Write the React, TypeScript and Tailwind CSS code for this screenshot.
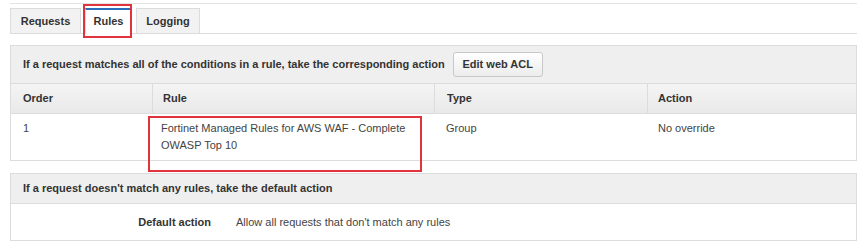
const font = { fontFamily: '"Liberation Sans", Arial, sans-serif' };

function Tab({ label, active }: { label: string; active?: boolean }) {
  return (
    <div
      className={
        "relative h-[26px] -mb-px flex items-center justify-center border border-[#dcdcdc] text-[11px] font-bold text-[#333] " +
        (active ? "bg-white border-b-white border-t-2 border-t-[#2a6ebb]" : "bg-[#f2f2f2]")
      }
    >
      {label}
      {active && <div className="absolute -left-[3px] -right-[1px] -top-[6px] -bottom-[5px] border-2 border-[#e0333c]" />}
    </div>
  );
}

export default function App() {
  return (
    <div className="w-[866px] h-[246px] bg-white text-[#444]" style={font}>
      <div className="ml-[10px] w-[847px]">
        <div className="mt-[3px] border-t border-[#e3e3e3]" />
        <div className="mt-[4px] flex gap-[4px] border-b border-[#dcdcdc]">
          <div className="w-[71px]"><Tab label="Requests" /></div>
          <div className="w-[47px]"><Tab label="Rules" active /></div>
          <div className="w-[64px]"><Tab label="Logging" /></div>
        </div>

        <div className="mt-[11px] border border-[#dcdcdc]">
          <div className="h-[38px] flex items-center px-[12px] bg-[#efefef] border-b border-[#dcdcdc] text-[11px] font-bold text-[#333]">
            <span>If a request matches all of the conditions in a rule, take the corresponding action</span>
            <button className="ml-[8px] h-[25px] w-[90px] rounded-[3px] border border-[#c8c8c8] bg-gradient-to-b from-white to-[#ececec] text-[11px] font-bold text-[#333]">
              Edit web ACL
            </button>
          </div>
          <div className="grid grid-cols-[141px_282px_213px_1fr] h-[30px] bg-gradient-to-b from-[#f4f4f4] to-[#e9e9e9] border-b border-[#dcdcdc] text-[11px] font-bold text-[#333]">
            <div className="flex items-center pl-[12px]">Order</div>
            <div className="flex items-center pl-[10px] border-l border-[#dcdcdc]">Rule</div>
            <div className="flex items-center pl-[12px] border-l border-[#dcdcdc]">Type</div>
            <div className="flex items-center pl-[10px] border-l border-[#dcdcdc]">Action</div>
          </div>
          <div className="grid grid-cols-[141px_282px_213px_1fr] h-[46px] text-[11px] leading-[17px]">
            <div className="pl-[12px] pt-[6px]">1</div>
            <div className="relative pl-[9px] pt-[6px]">
              Fortinet Managed Rules for AWS WAF - Complete
              <br />
              OWASP Top 10
              <div className="absolute left-[-4px] top-[2px] w-[274px] h-[56px] border-2 border-[#e0333c]" />
            </div>
            <div className="pl-[12px] pt-[6px]">Group</div>
            <div className="pl-[11px] pt-[6px]">No override</div>
          </div>
        </div>

        <div className="mt-[12px] border border-[#dcdcdc]">
          <div className="h-[30px] flex items-center px-[12px] bg-[#efefef] border-b border-[#dcdcdc] text-[11px] font-bold text-[#333]">
            If a request doesn't match any rules, take the default action
          </div>
          <div className="h-[36px] flex items-center text-[11px]">
            <div className="w-[200px] text-right font-bold text-[#333]">Default action</div>
            <div className="ml-[25px]">Allow all requests that don't match any rules</div>
          </div>
        </div>
      </div>
    </div>
  );
}
